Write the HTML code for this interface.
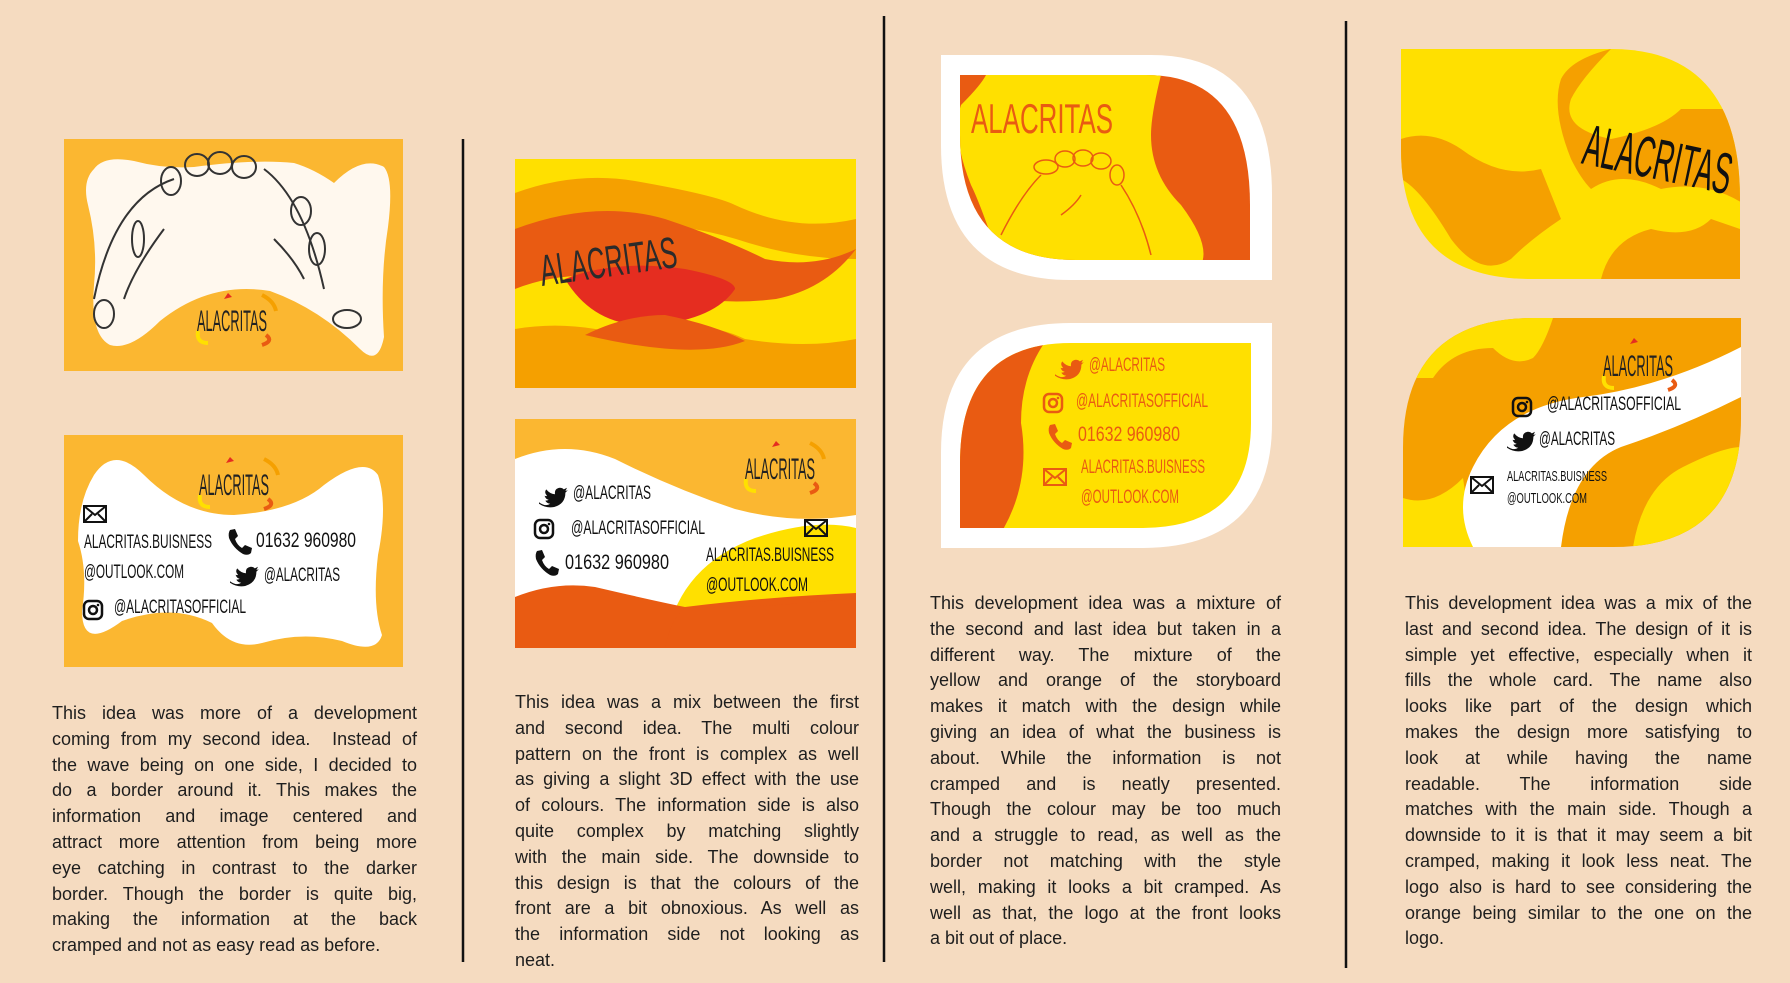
<!DOCTYPE html>
<html><head><meta charset="utf-8">
<style>
html,body{margin:0;padding:0}
body{width:1790px;height:983px;background:#f5dbc0;position:relative;overflow:hidden;font-family:"Liberation Sans",sans-serif}
svg{position:absolute;left:0;top:0}
.t{position:absolute;font-size:18px;line-height:25.8px;color:#1e1e1e}
.t div{text-align:justify;text-align-last:justify;white-space:nowrap}
.t div.l{text-align-last:left}
.c{font-family:"Liberation Sans Narrow","Liberation Sans",sans-serif}
</style></head><body>
<svg width="1790" height="983" viewBox="0 0 1790 983">
<defs>
<g id="logo">
 <path d="M-8,-22 l4,-6 l4,4z" fill="#e52d20"/>
 <path d="M30,-26 q12,6 14,16" stroke="#f5a000" stroke-width="4" fill="none"/>
 <path d="M-34,10 q-2,12 10,12" stroke="#ffe000" stroke-width="4" fill="none"/>
 <path d="M34,14 q8,6 -4,10" stroke="#e95b12" stroke-width="4" fill="none"/>
 <text x="0" y="10" text-anchor="middle" font-size="30" textLength="70" lengthAdjust="spacingAndGlyphs" class="c" fill="#222">ALACRITAS</text>
</g>
<g id="tw"><path transform="scale(0.8)" d="M0,4 q8,6 14,2 q-5,-1 -6,-4 q3,0 4,-1 q-4,-1 -5,-5 q2,1 3,0 q-4,-4 -1,-8 q5,6 11,6 q-1,-7 6,-8 q3,0 5,2 l4,-2 l-2,4 l3,-1 l-3,3 q0,14 -14,18 q-10,2 -19,-4z" fill="currentColor"/></g>
<g id="ig"><rect x="0" y="-16" width="18" height="18" rx="5" fill="none" stroke="currentColor" stroke-width="2.5"/><circle cx="9" cy="-7" r="4" fill="none" stroke="currentColor" stroke-width="2.5"/><circle cx="14" cy="-12" r="1.3" fill="currentColor"/></g>
<g id="ph"><path d="M2,-18 l5,-1 l3,7 l-3,3 q2,6 7,9 l3,-3 l7,3 l-1,5 q-3,3 -8,1 q-10,-6 -14,-16 q-1,-5 1,-8z" fill="currentColor"/></g>
<g id="ml"><rect x="0" y="-16" width="22" height="16" fill="none" stroke="currentColor" stroke-width="2"/><path d="M0,-16 l11,9 l11,-9 M0,0 l8,-8 M22,0 l-8,-8" fill="none" stroke="currentColor" stroke-width="2"/></g>
</defs>

<line x1="463" y1="139" x2="463" y2="962" stroke="#111" stroke-width="2.5"/>
<line x1="884" y1="16" x2="884" y2="962" stroke="#111" stroke-width="2.5"/>
<line x1="1346" y1="21" x2="1346" y2="968" stroke="#111" stroke-width="2.5"/>

<g transform="translate(64,139)">
 <rect width="339" height="232" fill="#fbb731"/>
 <path d="M30,30 q10,-14 40,-8 q30,8 60,6 q60,-8 100,-4 q20,6 40,20 q28,-28 50,-16 q10,12 4,60 q-8,50 -4,110 q-6,30 -24,12 q-40,-40 -90,-58 q-60,-10 -110,30 q-30,30 -50,24 q-20,-10 -16,-60 q4,-40 -6,-80 q-6,-24 6,-36z" fill="#fff8ee"/>
 <g fill="none" stroke="#333" stroke-width="2">
  <ellipse cx="40" cy="175" rx="10" ry="14"/><ellipse cx="74" cy="100" rx="6" ry="18"/><ellipse cx="107" cy="42" rx="10" ry="14"/>
  <ellipse cx="133" cy="26" rx="12" ry="11"/><ellipse cx="156" cy="24" rx="12" ry="11"/><ellipse cx="180" cy="28" rx="12" ry="11"/>
  <ellipse cx="237" cy="72" rx="10" ry="14"/><ellipse cx="253" cy="110" rx="8" ry="16"/><ellipse cx="283" cy="180" rx="14" ry="9"/>
  <path d="M30,160 q20,-100 80,-120 M200,30 q40,30 60,120 M100,90 q-30,40 -40,70 M210,100 q20,20 30,40"/>
 </g>
 <use href="#logo" x="168" y="182"/>
</g>
<g transform="translate(64,435)">
 <rect width="339" height="232" fill="#fbb731"/>
 <path d="M30,40 q20,-30 50,0 q40,40 90,40 q60,-4 90,-30 q40,-30 54,-10 q10,30 0,80 q-6,50 4,80 q-6,20 -40,6 q-40,-10 -80,2 q-30,8 -50,-20 q-40,-20 -90,-2 q-40,30 -40,-10 q6,-40 -4,-70 q0,-40 16,-66z" fill="#fff"/>
 <use href="#logo" x="170" y="50"/>
 <g color="#111">
  <use href="#ml" x="20" y="87"/>
  <text x="20" y="113" font-size="19" textLength="128" lengthAdjust="spacingAndGlyphs" class="c" fill="#111">ALACRITAS.BUISNESS</text>
  <text x="20" y="143" font-size="19" textLength="100" lengthAdjust="spacingAndGlyphs" class="c" fill="#111">@OUTLOOK.COM</text>
  <use href="#ph" x="164" y="113"/><text x="192" y="112" font-size="21" textLength="100" lengthAdjust="spacingAndGlyphs" class="c" fill="#111">01632 960980</text>
  <use href="#tw" x="166" y="143"/><text x="200" y="146" font-size="19" textLength="76" lengthAdjust="spacingAndGlyphs" class="c" fill="#111">@ALACRITAS</text>
  <use href="#ig" x="20" y="182"/><text x="50" y="178" font-size="19" textLength="132" lengthAdjust="spacingAndGlyphs" class="c" fill="#111">@ALACRITASOFFICIAL</text>
 </g>
</g>

<g transform="translate(515,159)">
 <rect width="341" height="229" fill="#ffe000"/>
 <path d="M0,34 q60,-22 120,-12 q80,14 100,24 q60,28 121,14 l0,40 q-60,0 -120,-20 q-100,-30 -221,0z" fill="#f5a000"/>
 <path d="M0,70 q80,-30 150,-10 q60,20 100,40 q50,10 91,-10 q-30,40 -80,50 q-80,10 -150,-20 q-60,-10 -111,10z" fill="#e95b12"/>
 <path d="M50,120 q50,-20 120,-10 q50,10 50,20 q-20,30 -80,36 q-60,4 -90,-46z" fill="#e52d20"/>
 <path d="M0,170 q60,-10 120,10 q60,-24 110,0 q60,10 111,0 l0,49 l-341,0z" fill="#f5a000"/>
 <path d="M70,176 q40,-20 80,-20 q50,10 80,26 q-50,20 -160,-6z" fill="#e95b12"/>
 <text x="24" y="118" font-size="44" textLength="138" lengthAdjust="spacingAndGlyphs" class="c" fill="#2b2b2b" transform="rotate(-8 90 100)">ALACRITAS</text>
</g>
<g transform="translate(515,419)">
 <rect width="341" height="229" fill="#fbb731"/>
 <path d="M0,40 q50,-20 100,0 q60,30 120,50 q60,16 121,6 l0,130 l-341,0z" fill="#fff"/>
 <path d="M150,229 q10,-80 90,-110 q60,-20 101,-10 l0,120z" fill="#ffe000"/>
 <path d="M0,178 q40,-16 80,-10 q60,14 90,20 q80,-10 171,-14 l0,55 l-341,0z" fill="#e95b12"/>
 <path d="M150,229 q6,-30 20,-40 q80,0 171,-10 l0,50z" fill="#e95b12"/>
 <use href="#logo" x="265" y="50"/>
 <g color="#111">
  <use href="#tw" x="24" y="80"/><text x="58" y="80" font-size="19" textLength="78" lengthAdjust="spacingAndGlyphs" class="c" fill="#111">@ALACRITAS</text>
  <use href="#ig" x="20" y="117"/><text x="56" y="115" font-size="19" textLength="134" lengthAdjust="spacingAndGlyphs" class="c" fill="#111">@ALACRITASOFFICIAL</text>
  <use href="#ph" x="20" y="150"/><text x="50" y="150" font-size="21" textLength="104" lengthAdjust="spacingAndGlyphs" class="c" fill="#111">01632 960980</text>
  <use href="#ml" x="290" y="117"/>
  <text x="191" y="142" font-size="19" textLength="128" lengthAdjust="spacingAndGlyphs" class="c" fill="#111">ALACRITAS.BUISNESS</text>
  <text x="191" y="172" font-size="19" textLength="102" lengthAdjust="spacingAndGlyphs" class="c" fill="#111">@OUTLOOK.COM</text>
 </g>
</g>

<g transform="translate(941,55)">
 <path d="M0,0 L210,0 Q331,0 331,140 L331,225 L130,225 Q0,225 0,90 Z" fill="#fff"/>
 <clipPath id="c3a"><path d="M19,20 L205,20 Q309,20 309,150 L309,205 L135,205 Q19,205 19,80 Z"/></clipPath>
 <g clip-path="url(#c3a)">
  <rect width="331" height="225" fill="#e95b12"/>
  <path d="M45,20 L220,20 q-10,40 -10,60 q0,40 30,70 q30,40 20,60 L60,210 q-20,-60 -30,-80 q-20,-50 -10,-80 q20,-20 25,-30z" fill="#ffe000"/>
  <g fill="none" stroke="#e95b12" stroke-width="1.5"><ellipse cx="105" cy="112" rx="12" ry="7"/><ellipse cx="124" cy="104" rx="10" ry="8"/><ellipse cx="142" cy="103" rx="10" ry="8"/><ellipse cx="160" cy="106" rx="10" ry="8"/><ellipse cx="176" cy="120" rx="7" ry="10"/><path d="M60,180 q20,-40 40,-60 M120,160 q14,-10 20,-20 M180,130 q20,30 30,70"/></g>
 </g>
 <text x="30" y="78" font-size="42" textLength="142" lengthAdjust="spacingAndGlyphs" class="c" fill="#e95b12">ALACRITAS</text>
</g>
<g transform="translate(941,323)">
 <path d="M130,0 L331,0 L331,100 Q331,225 200,225 L0,225 L0,130 Q0,0 130,0 Z" fill="#fff"/>
 <clipPath id="c3b"><path d="M130,20 L310,20 L310,100 Q310,205 200,205 L19,205 L19,140 Q19,20 130,20 Z"/></clipPath>
 <g clip-path="url(#c3b)">
  <rect width="331" height="225" fill="#ffe000"/>
  <path d="M0,0 L120,0 q-40,40 -40,100 q10,60 -20,110 L0,210z" fill="#e95b12"/>
 </g>
 <g color="#e95b12">
  <use href="#tw" x="114" y="48"/><text x="148" y="48" font-size="19" textLength="76" lengthAdjust="spacingAndGlyphs" class="c" fill="#e95b12">@ALACRITAS</text>
  <use href="#ig" x="103" y="87"/><text x="135" y="84" font-size="19" textLength="132" lengthAdjust="spacingAndGlyphs" class="c" fill="#e95b12">@ALACRITASOFFICIAL</text>
  <use href="#ph" x="107" y="120"/><text x="137" y="118" font-size="21" textLength="102" lengthAdjust="spacingAndGlyphs" class="c" fill="#e95b12">01632 960980</text>
  <use href="#ml" x="103" y="162"/>
  <text x="140" y="150" font-size="19" textLength="124" lengthAdjust="spacingAndGlyphs" class="c" fill="#e95b12">ALACRITAS.BUISNESS</text>
  <text x="140" y="180" font-size="19" textLength="98" lengthAdjust="spacingAndGlyphs" class="c" fill="#e95b12">@OUTLOOK.COM</text>
 </g>
</g>

<g transform="translate(1401,49)">
 <clipPath id="c4a"><path d="M0,0 L210,0 Q339,0 339,150 L339,230 L130,230 Q0,230 0,100 Z"/></clipPath>
 <g clip-path="url(#c4a)">
  <rect width="339" height="230" fill="#ffe000"/>
  <path d="M95,0 L210,0 q-30,30 -40,50 q-10,30 40,40 q50,-10 70,-30 l50,0 l20,100 q-40,-30 -90,-20 q-40,-20 -70,0 q-10,-10 -20,-30 q-20,-50 -10,-80 q10,-20 50,-30 M0,90 q30,-10 60,10 q40,30 80,20 l20,50 q-30,20 -50,40 q-30,20 -60,-20 q-30,-50 -50,-60z" fill="#f5a000"/>
  <path d="M200,230 q10,-40 50,-50 q40,10 60,-10 l29,10 l0,50z" fill="#f5a000"/>
 </g>
 <text x="180" y="130" font-size="58" textLength="150" lengthAdjust="spacingAndGlyphs" class="c" fill="#111" transform="rotate(12 255 120)">ALACRITAS</text>
</g>
<g transform="translate(1403,318)">
 <clipPath id="c4b"><path d="M130,0 L338,0 L338,100 Q338,229 210,229 L0,229 L0,130 Q0,0 130,0 Z"/></clipPath>
 <g clip-path="url(#c4b)">
  <rect width="338" height="229" fill="#f5a000"/>
  <path d="M0,0 L150,0 q-10,30 -20,40 q-20,10 -40,-10 q-40,0 -60,30 L0,60z M0,180 q30,10 60,-20 l10,69 l-70,0z M230,229 q10,-60 50,-80 q40,-20 58,-20 l0,100z" fill="#ffe000"/>
  <path d="M70,229 q-20,-40 0,-80 q30,-60 110,-70 q80,-10 158,-50 l0,50 q-60,30 -120,50 q-50,20 -60,100z" fill="#fff"/>
 </g>
 <use href="#logo" x="235" y="48"/>
 <g color="#111">
  <use href="#ig" x="110" y="96"/><text x="144" y="92" font-size="19" textLength="134" lengthAdjust="spacingAndGlyphs" class="c" fill="#111">@ALACRITASOFFICIAL</text>
  <use href="#tw" x="104" y="125"/><text x="136" y="127" font-size="19" textLength="76" lengthAdjust="spacingAndGlyphs" class="c" fill="#111">@ALACRITAS</text>
  <use href="#ml" x="68" y="175"/>
  <text x="104" y="163" font-size="15" textLength="100" lengthAdjust="spacingAndGlyphs" class="c" fill="#111">ALACRITAS.BUISNESS</text>
  <text x="104" y="185" font-size="15" textLength="80" lengthAdjust="spacingAndGlyphs" class="c" fill="#111">@OUTLOOK.COM</text>
 </g>
</g>
</svg>

<div class="t" style="left:52px;top:701px;width:365px">
<div>This idea was more of a development</div>
<div>coming from my second idea.&nbsp; Instead of</div>
<div>the wave being on one side, I decided to</div>
<div>do a border around it. This makes the</div>
<div>information and image centered and</div>
<div>attract more attention from being more</div>
<div>eye catching in contrast to the darker</div>
<div>border. Though the border is quite big,</div>
<div>making the information at the back</div>
<div class="l">cramped and not as easy read as before.</div>
</div>

<div class="t" style="left:515px;top:690px;width:344px">
<div>This idea was a mix between the first</div>
<div>and second idea. The multi colour</div>
<div>pattern on the front is complex as well</div>
<div>as giving a slight 3D effect with the use</div>
<div>of colours. The information side is also</div>
<div>quite complex by matching slightly</div>
<div>with the main side. The downside to</div>
<div>this design is that the colours of the</div>
<div>front are a bit obnoxious. As well as</div>
<div>the information side not looking as</div>
<div class="l">neat.</div>
</div>

<div class="t" style="left:930px;top:591px;width:351px">
<div>This development idea was a mixture of</div>
<div>the second and last idea but taken in a</div>
<div>different way. The mixture of the</div>
<div>yellow and orange of the storyboard</div>
<div>makes it match with the design while</div>
<div>giving an idea of what the business is</div>
<div>about. While the information is not</div>
<div>cramped and is neatly presented.</div>
<div>Though the colour may be too much</div>
<div>and a struggle to read, as well as the</div>
<div>border not matching with the style</div>
<div>well, making it looks a bit cramped. As</div>
<div>well as that, the logo at the front looks</div>
<div class="l">a bit out of place.</div>
</div>

<div class="t" style="left:1405px;top:591px;width:347px">
<div>This development idea was a mix of the</div>
<div>last and second idea. The design of it is</div>
<div>simple yet effective, especially when it</div>
<div>fills the whole card. The name also</div>
<div>looks like part of the design which</div>
<div>makes the design more satisfying to</div>
<div>look at while having the name</div>
<div>readable. The information side</div>
<div>matches with the main side. Though a</div>
<div>downside to it is that it may seem a bit</div>
<div>cramped, making it look less neat. The</div>
<div>logo also is hard to see considering the</div>
<div>orange being similar to the one on the</div>
<div class="l">logo.</div>
</div>
</body></html>
